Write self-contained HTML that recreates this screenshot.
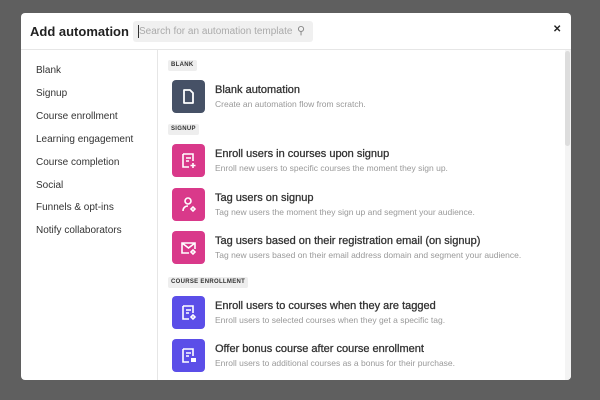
<!DOCTYPE html>
<html><head><style>
*{margin:0;padding:0;box-sizing:border-box}
body{width:600px;height:400px;background:#5f5f5f;font-family:"Liberation Sans",sans-serif;position:relative;overflow:hidden}
.m{position:absolute;left:21px;top:13px;width:550px;height:367px;background:#fff;border-radius:4px;overflow:hidden}
.hd{position:absolute;left:0;top:0;width:550px;height:37px;border-bottom:1px solid #e6e6e6}
.ttl{position:absolute;left:9px;top:11px;font-size:13px;font-weight:bold;color:#222}
.srch{position:absolute;left:112px;top:8px;width:180px;height:21px;background:#f0f0f0;border-radius:3px;font-size:10px;color:#aaa;padding:5px 0 0 6px}
.srch:before{content:"";position:absolute;left:5px;top:4px;width:1px;height:13px;background:#333}
.x{position:absolute;left:532px;top:11px;font-size:10px;color:#222;font-weight:bold}
.sb{position:absolute;left:0;top:37px;width:137px;height:330px;border-right:1px solid #e6e6e6}
.sb div{position:absolute;left:15px;font-size:10px;color:#333}
.tag{position:absolute;left:147px;height:11px;background:#eee;font-size:6px;font-weight:bold;letter-spacing:.3px;color:#333;padding:2px 3px;border-radius:2px}
.ic{position:absolute;left:151px;width:33px;height:33px;border-radius:4px}
.t{position:absolute;left:194px;font-size:11px;color:#333;-webkit-text-stroke:.3px #333}
.d{position:absolute;left:194px;font-size:8.5px;color:#999}
.scr{position:absolute;left:544px;top:37px;width:6px;height:330px;background:#f4f4f4}
.scr div{width:5px;height:95px;background:#ddd;border-radius:3px;margin-top:1px}
svg{position:absolute;left:7px;top:7px}
</style></head><body>
<div class="m">
<div class="hd"><div class="ttl">Add automation</div><div class="srch">Search for an automation template<span style="position:absolute;right:8px;top:3px;color:#888;font-size:11px">&#9906;</span></div><div class="x">✕</div></div>
<div class="sb">
<div style="top:15px">Blank</div><div style="top:38px">Signup</div><div style="top:61px">Course enrollment</div><div style="top:84px">Learning engagement</div><div style="top:107px">Course completion</div><div style="top:130px">Social</div><div style="top:152px">Funnels &amp; opt-ins</div><div style="top:175px">Notify collaborators</div>
</div>
<div class="tag" style="top:47px">BLANK</div>
<div class="ic" style="top:67px;background:#465166"><svg width="19" height="19" viewBox="0 0 19 19"><path d="M5 3h6l3 3v10H5z" fill="none" stroke="#fff" stroke-width="1.8" stroke-linejoin="round"/></svg></div>
<div class="t" style="top:71px">Blank automation</div><div class="d" style="top:86px">Create an automation flow from scratch.</div>
<div class="tag" style="top:111px">SIGNUP</div>
<div class="ic" style="top:131px;background:#d9398a"><svg width="19" height="19" viewBox="0 0 19 19"><path d="M4 3h10v7M4 3v13h6M7 7h5M7 10h3M14 12v5M11.5 14.5h5" fill="none" stroke="#fff" stroke-width="1.6"/></svg></div>
<div class="t" style="top:135px">Enroll users in courses upon signup</div><div class="d" style="top:150px">Enroll new users to specific courses the moment they sign up.</div>
<div class="ic" style="top:175px;background:#d9398a"><svg width="19" height="19" viewBox="0 0 19 19"><circle cx="9" cy="6" r="3" fill="none" stroke="#fff" stroke-width="1.6"/><path d="M4 16c0-3 2-5 5-5M12 14l2-2 2 2-2 2z" fill="none" stroke="#fff" stroke-width="1.6"/></svg></div>
<div class="t" style="top:179px">Tag users on signup</div><div class="d" style="top:194px">Tag new users the moment they sign up and segment your audience.</div>
<div class="ic" style="top:218px;background:#d9398a"><svg width="19" height="19" viewBox="0 0 19 19"><path d="M10 15H3V5h13v6M3 5l6.5 5 6.5-5M12 14l2-2 2 2-2 2z" fill="none" stroke="#fff" stroke-width="1.6"/></svg></div>
<div class="t" style="top:222px">Tag users based on their registration email (on signup)</div><div class="d" style="top:237px">Tag new users based on their email address domain and segment your audience.</div>
<div class="tag" style="top:264px">COURSE ENROLLMENT</div>
<div class="ic" style="top:283px;background:#5b4ee8"><svg width="19" height="19" viewBox="0 0 19 19"><path d="M4 3h10v7M4 3v13h6M7 7h5M7 10h3M12 14l2-2 2 2-2 2z" fill="none" stroke="#fff" stroke-width="1.6"/></svg></div>
<div class="t" style="top:287px">Enroll users to courses when they are tagged</div><div class="d" style="top:302px">Enroll users to selected courses when they get a specific tag.</div>
<div class="ic" style="top:326px;background:#5b4ee8"><svg width="19" height="19" viewBox="0 0 19 19"><path d="M4 3h10v7M4 3v13h6M7 7h5M7 10h3" fill="none" stroke="#fff" stroke-width="1.6"/><rect x="12" y="12" width="5" height="4" fill="#fff"/></svg></div>
<div class="t" style="top:330px">Offer bonus course after course enrollment</div><div class="d" style="top:345px">Enroll users to additional courses as a bonus for their purchase.</div>
<div class="scr"><div></div></div>
</div>
</body></html>
